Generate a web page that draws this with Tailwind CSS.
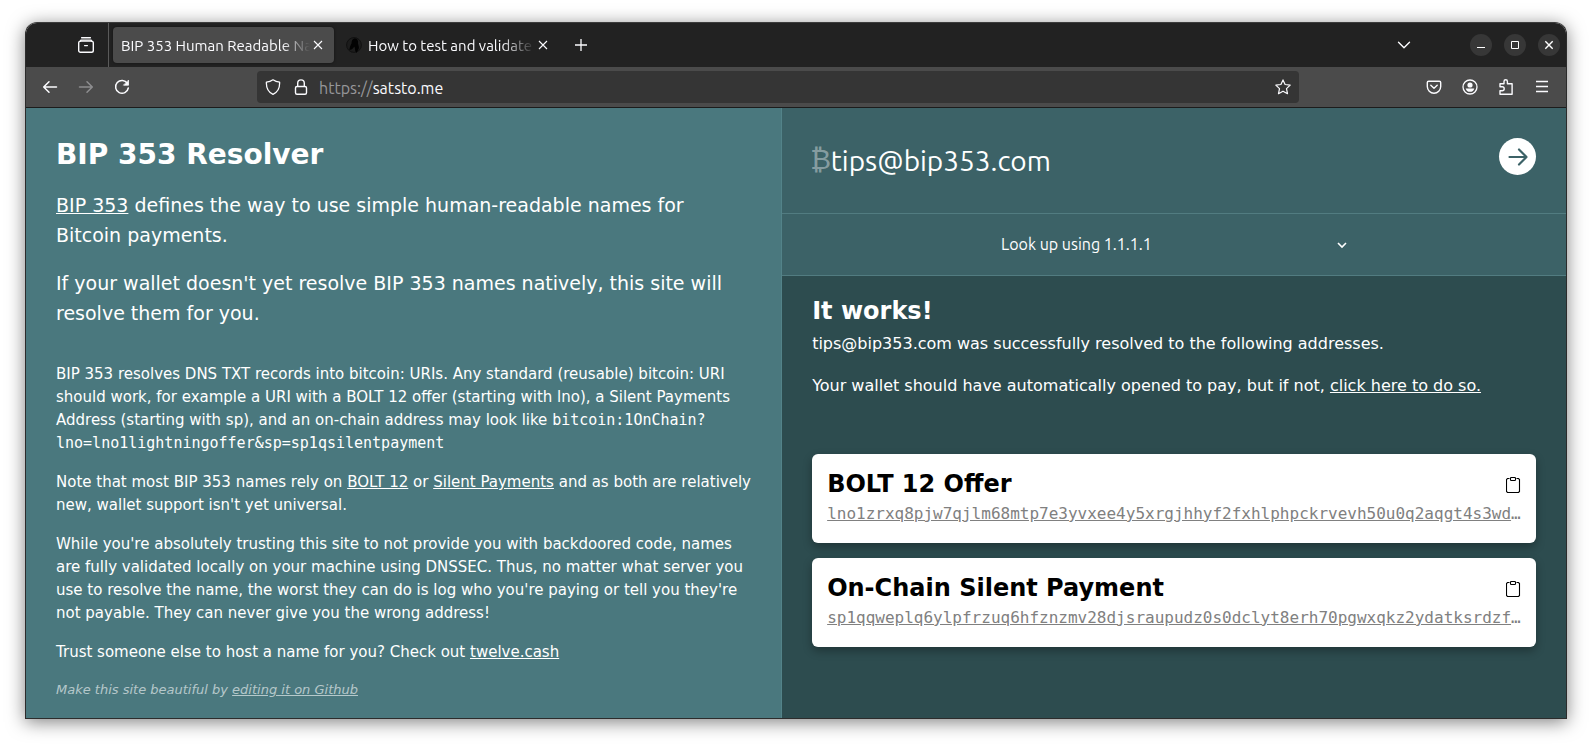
<!DOCTYPE html>
<html lang="en">
<head>
<meta charset="utf-8">
<title>BIP 353 Human Readable Names</title>
<script src="https://cdn.jsdelivr.net/npm/@tailwindcss/browser@4"></script>
</head>
<body class="bg-white">
<div class="flex min-h-screen flex-col px-[25px] pt-[22px] pb-[28px]">
<div class="flex flex-1 flex-col overflow-hidden rounded-t-xl border border-[#2c2c2c] border-t-[#3c3c3c] shadow-[0_3px_18px_rgba(0,0,0,0.5)]">

  <header class="font-[Ubuntu,'Noto_Sans',sans-serif] text-[15px] text-[#fbfbfe]">
    <!-- Tab strip -->
    <div class="flex h-[44px] items-center bg-[#222222] pr-[6px]">
      <button aria-label="Open recent windows" class="ml-[52px] mr-[14px]">
        <svg class="size-4" viewBox="0 0 16 16" fill="none" stroke="currentColor" stroke-width="1.4" stroke-linecap="round"><path d="M3.6 .7h8.8M2.4 4.2 3 3.1h10l.6 1.1"/><rect x=".7" y="4.1" width="14.6" height="11.1" rx="1.8"/><path d="M6.6 8.6h2.8"/></svg>
      </button>
      <div class="h-full w-px bg-[#5a5a5a]"></div>
      <div class="ml-1 flex h-[36px] w-[221px] items-center rounded bg-[#4b4b4b] pl-2 pr-[11px] shadow-[0_0_3px_rgba(0,0,0,0.5)]">
        <span class="min-w-0 flex-1 overflow-hidden pt-[2px] whitespace-nowrap mask-r-from-85% mask-r-to-100%">BIP 353 Human Readable Names</span>
        <button aria-label="Close tab" class="ml-[3px]"><svg class="size-[10px]" viewBox="0 0 10 10" stroke="currentColor" stroke-width="1.1"><path d="m1 1 8 8M9 1 1 9"/></svg></button>
      </div>
      <div class="flex h-[36px] w-[224px] items-center pl-[12px] pr-[10px]">
        <svg class="mr-[6px] size-4 shrink-0" viewBox="0 0 16 16"><circle cx="8" cy="8" r="7.4" fill="#1c1c1c" stroke="#111"/><path d="M8.2 1.6C10.6 1 12.4 3 12 5.6c-.2 1.6.8 3 .9 5 .1 1.600-.8 2-1.300 3.200l-1.100 1.900c-.6-.8-1.300-1.400-1.400-3-.1-1.600-.2-2.500-.9-3.300-.7 1.300-1.500 2.300-2.900 3.100L3.300 13c.5-2.900 1.200-4.800 2.200-6.500C5.700 4 6.200 2.200 8.200 1.600Z" fill="#020202"/></svg>
        <span class="min-w-0 flex-1 overflow-hidden pt-[2px] whitespace-nowrap mask-r-from-80% mask-r-to-100%">How to test and validate DNSSEC</span>
        <button aria-label="Close tab" class="ml-[3px]"><svg class="size-[10px]" viewBox="0 0 10 10" stroke="currentColor" stroke-width="1.1"><path d="m1 1 8 8M9 1 1 9"/></svg></button>
      </div>
      <button aria-label="New tab" class="ml-4"><svg class="size-[14px]" viewBox="0 0 14 14" stroke="currentColor" stroke-width="1.3"><path d="M7 1v12M1 7h12"/></svg></button>
      <div class="flex-1"></div>
      <button aria-label="List all tabs" class="mr-[59px]"><svg class="h-[8px] w-[14px]" viewBox="0 0 14 8" fill="none" stroke="currentColor" stroke-width="1.4" stroke-linecap="round" stroke-linejoin="round"><path d="m1.500 1.200 5.500 5.500 5.500-5.500"/></svg></button>
      <div class="flex gap-3">
        <button aria-label="Minimize" class="flex size-[22px] rounded-full bg-[#373737]"><svg viewBox="0 0 22 22" stroke="#fff"><path d="M7 13.500h8"/></svg></button>
        <button aria-label="Maximize" class="flex size-[22px] rounded-full bg-[#373737]"><svg viewBox="0 0 22 22" fill="none" stroke="#fff"><path d="M7.500 7.500h7v7h-7z"/></svg></button>
        <button aria-label="Close window" class="flex size-[22px] rounded-full bg-[#373737]"><svg viewBox="0 0 22 22" stroke="#fff" stroke-width="1.400"><path d="m7.300 7.300 7.400 7.400M14.700 7.300l-7.400 7.400"/></svg></button>
      </div>
    </div>

    <!-- Navigation toolbar -->
    <div class="flex h-[41px] items-center border-b border-[#1c1c1c] bg-[#4b4b4b] pl-4 pr-4">
      <div class="flex gap-5">
        <button aria-label="Back"><svg class="size-4" viewBox="0 0 16 16" fill="none" stroke="currentColor" stroke-width="1.500" stroke-linecap="round" stroke-linejoin="round"><path d="M14.500 8H1.800M7 2.700 1.700 8 7 13.300"/></svg></button>
        <button aria-label="Forward" class="text-[#8d8d8f]"><svg class="size-4" viewBox="0 0 16 16" fill="none" stroke="currentColor" stroke-width="1.500" stroke-linecap="round" stroke-linejoin="round"><path d="M1.500 8h12.700M9 2.700 14.300 8 9 13.300"/></svg></button>
        <button aria-label="Reload"><svg class="size-4" viewBox="0 0 16 16" fill="none" stroke="currentColor" stroke-width="1.500" stroke-linecap="round"><path d="M13.400 4.400A6.400 6.400 0 1 0 14.300 9"/><path d="M14.500 1.500v4.700H9.800Z" fill="currentColor" stroke-width=".8" stroke-linejoin="round"/></svg></button>
      </div>
      <div class="ml-[127px] flex h-[32px] min-w-0 flex-1 items-center rounded bg-[#353535] pl-2 pr-2">
        <svg class="size-4 shrink-0" viewBox="0 0 16 16" fill="none" stroke="currentColor" stroke-width="1.300" stroke-linejoin="round"><path d="M8 .8c2 1.400 4.200 2.100 6.600 2.300.3 5.600-1.800 10-6.600 12.200C3.200 13.100 1.100 8.700 1.400 3.100 3.800 2.900 6 2.200 8 .8Z"/></svg>
        <svg class="ml-3 size-4 shrink-0" viewBox="0 0 16 16" fill="none" stroke="currentColor" stroke-width="1.400"><rect x="2.500" y="7.500" width="11" height="7.800" rx="1.500"/><path d="M4.700 7.500V4.200a3.300 3.300 0 0 1 6.600 0v3.300"/></svg>
        <div role="textbox" contenteditable="true" aria-label="Address" class="ml-[10px] flex-1 pt-px text-[16px] outline-none"><span class="text-[#97979a]">https://</span>satsto.me</div>
        <button aria-label="Bookmark this page"><svg class="size-4" viewBox="0 0 16 16" fill="none" stroke="currentColor" stroke-width="1.200" stroke-linejoin="round"><path d="m8 .9 2.100 4.600 5.100.6-3.700 3.500 1 5.100L8 12.200l-4.500 2.500 1-5.100L.8 6.100l5.100-.6Z"/></svg></button>
      </div>
      <div class="ml-[127px] flex gap-5">
        <button aria-label="Save to Pocket"><svg class="size-4" viewBox="0 0 16 16" fill="none" stroke="currentColor" stroke-width="1.400" stroke-linecap="round" stroke-linejoin="round"><path d="M2.700 2.200h10.600c.8 0 1.400.6 1.400 1.400v4a6.700 6.700 0 0 1-13.400 0v-4c0-.8.6-1.400 1.400-1.400Z"/><path d="m4.800 6.300 3.200 3 3.200-3"/></svg></button>
        <button aria-label="Account"><svg class="size-4" viewBox="0 0 16 16"><circle cx="8" cy="8" r="7" fill="none" stroke="currentColor" stroke-width="1.300"/><circle cx="8" cy="6" r="2.600" fill="currentColor"/><path d="M3.700 9.400h8.600c-.3 1.900-2 3.400-4.300 3.400S4 11.300 3.700 9.400Z" fill="currentColor"/></svg></button>
        <button aria-label="Extensions"><svg class="size-4" viewBox="0 0 16 16" fill="none" stroke="currentColor" stroke-width="1.400" stroke-linejoin="round"><path d="M2 7V4.700h4V2.500a1.700 1.700 0 0 1 3.400 0v2.200h4.700v10.500H2v-3.400h2.200a2 2 0 0 0 0-4H2Z"/></svg></button>
        <button aria-label="Menu"><svg class="size-4" viewBox="0 0 16 16" stroke="currentColor" stroke-width="1.300"><path d="M2 2.500h12M2 7.500h12M2 12.500h12"/></svg></button>
      </div>
    </div>
  </header>

  <!-- Web page -->
  <main class="flex flex-1 font-['DejaVu_Sans',sans-serif] text-white">
    <section class="w-[49.1%] border-r border-[#538389] bg-[#4a787e] pt-[30px] pr-5 pb-[18px] pl-[30px]">
      <div class="flex max-w-[700px] flex-col">
        <h1 class="text-[28px] leading-[34px] font-bold">BIP 353 Resolver</h1>
        <div class="mt-[18px] flex max-w-[680px] flex-col gap-[18px] text-[19px] leading-[30px]">
          <p><a href="#" class="underline">BIP 353</a> defines the way to use simple human-readable names for Bitcoin payments.</p>
          <p>If your wallet doesn't yet resolve BIP 353 names natively, this site will resolve them for you.</p>
        </div>
        <div class="mt-[35px] flex flex-col gap-4 text-[15px] leading-[23px]">
          <p>BIP 353 resolves DNS TXT records into bitcoin: URIs. Any standard (reusable) bitcoin: URI should work, for example a URI with a BOLT 12 offer (starting with lno), a Silent Payments Address (starting with sp), and an on-chain address may look like <code class="font-['DejaVu_Sans_Mono',monospace]">bitcoin:1OnChain?<wbr>lno=lno1lightningoffer&amp;sp=sp1qsilentpayment</code></p>
          <p>Note that most BIP 353 names rely on <a href="#" class="underline">BOLT 12</a> or <a href="#" class="underline">Silent Payments</a> and as both are relatively new, wallet support isn't yet universal.</p>
          <p>While you're absolutely trusting this site to not provide you with backdoored code, names are fully validated locally on your machine using DNSSEC. Thus, no matter what server you use to resolve the name, the worst they can do is log who you're paying or tell you they're not payable. They can never give you the wrong address!</p>
          <p>Trust someone else to host a name for you? Check out <a href="#" class="underline">twelve.cash</a></p>
          <p class="text-[13px] leading-[19px] text-white/60 italic">Make this site beautiful by <a href="#" class="underline">editing it on Github</a></p>
        </div>
      </div>
    </section>

    <section class="flex min-w-0 flex-1 flex-col bg-[#2d4c4f]">
      <form class="bg-[#3c6267] font-[Ubuntu,'Noto_Sans',sans-serif]">
        <div class="flex h-[106px] items-start border-b border-[#527c81] pt-[30px] pr-[30px] pl-[28px]">
          <label for="name" class="flex h-[44px] items-center font-['DejaVu_Sans',sans-serif] text-[28px] text-white/40">₿</label>
          <input id="name" type="text" value="tips@bip353.com" class="h-[44px] min-w-0 flex-1 bg-transparent text-[28px] outline-none">
          <button type="button" aria-label="Resolve" class="flex size-[37px] items-center justify-center rounded-full bg-white text-[#3c6267]"><svg class="size-[20px]" viewBox="0 0 20 20" fill="none" stroke="currentColor" stroke-width="2.200" stroke-linecap="round" stroke-linejoin="round"><path d="M1.500 10h17M11 2.500l7.500 7.500-7.500 7.500"/></svg></button>
        </div>
        <div class="flex h-[62px] items-center justify-center border-b border-[#527c81] pb-0.5">
          <div class="relative w-[356px]">
            <label for="resolver" class="sr-only">Resolver</label>
            <select id="resolver" class="w-full appearance-none bg-transparent pl-[5px] text-[16px] leading-[24px] outline-none"><option>Look up using 1.1.1.1</option></select>
            <svg class="pointer-events-none absolute top-[9px] right-[5px] h-[8px] w-[10px]" viewBox="0 0 10 8" fill="none" stroke="currentColor" stroke-width="1.600"><path d="m1 2 4 4 4-4"/></svg>
          </div>
        </div>
      </form>
      <div class="px-[30px] pt-4 text-[16px] leading-[26px]">
        <h2 class="pb-px text-[24px] leading-[38px] font-bold">It works!</h2>
        <p>tips@bip353.com was successfully resolved to the following addresses.</p>
        <p class="mt-4">Your wallet should have automatically opened to pay, but if not, <a href="#" class="underline">click here to do so.</a></p>
        <div class="mt-[55px] flex flex-col gap-[15px] text-black">
          <article class="rounded-md bg-white px-[15px] pt-[15px] pb-4 shadow-[0_4px_10px_rgba(0,0,0,0.3)]">
            <div class="flex items-center justify-between pb-px">
              <h3 class="text-[24px] leading-[31px] font-bold">BOLT 12 Offer</h3>
              <button aria-label="Copy offer"><svg class="h-4 w-[15px]" viewBox="0 0 15 16" fill="none" stroke="currentColor" stroke-width="1.1"><path d="M3.500 1.500h-2l-1 1v12l1 1h11l1-1v-12l-1-1h-2"/><rect x="4.500" y=".5" width="5" height="3" rx=".8"/></svg></button>
            </div>
            <div class="truncate font-['DejaVu_Sans_Mono',monospace] text-[#808080]"><a href="#" class="underline">lno1zrxq8pjw7qjlm68mtp7e3yvxee4y5xrgjhhyf2fxhlphpckrvevh50u0q2aqgt4s3wdu4s3w</a></div>
          </article>
          <article class="rounded-md bg-white px-[15px] pt-[15px] pb-4 shadow-[0_4px_10px_rgba(0,0,0,0.3)]">
            <div class="flex items-center justify-between pb-px">
              <h3 class="text-[24px] leading-[31px] font-bold">On-Chain Silent Payment</h3>
              <button aria-label="Copy silent payment address"><svg class="h-4 w-[15px]" viewBox="0 0 15 16" fill="none" stroke="currentColor" stroke-width="1.1"><path d="M3.500 1.500h-2l-1 1v12l1 1h11l1-1v-12l-1-1h-2"/><rect x="4.500" y=".5" width="5" height="3" rx=".8"/></svg></button>
            </div>
            <div class="truncate font-['DejaVu_Sans_Mono',monospace] text-[#808080]"><a href="#" class="underline">sp1qqweplq6ylpfrzuq6hfznzmv28djsraupudz0s0dclyt8erh70pgwxqkz2ydatksrdzfq0s0d</a></div>
          </article>
        </div>
      </div>
    </section>
  </main>
</div>
</div>
</body>
</html>
